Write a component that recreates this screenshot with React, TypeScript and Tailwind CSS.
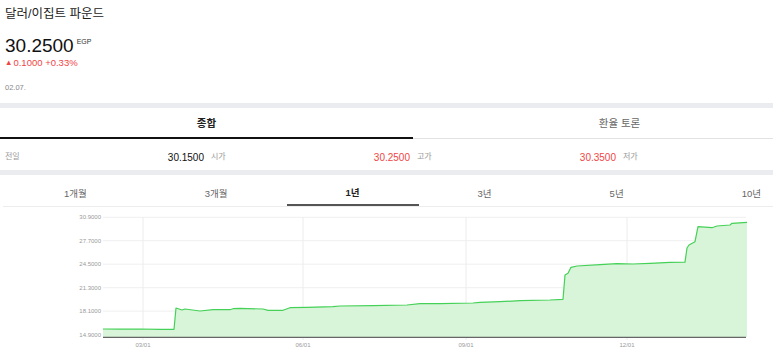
import React from "react";

const FONT = { fontFamily: '"Liberation Sans", "Noto Sans CJK KR", Arial, sans-serif' };

const pts: [number, number][] = [
  [103, 329], [120, 329.2], [140, 329], [160, 329.3], [174, 329.3], [176, 308], [182, 310], [185, 309],
  [200, 311], [213, 309.7], [230, 309.7], [233, 308.7], [240, 308.3], [263, 309], [268, 310.3], [283, 310.3],
  [290, 307.7], [307, 307.3], [333, 306.7], [340, 306], [373, 305.7], [407, 305], [420, 303.7], [440, 303.7],
  [473, 303], [480, 302.3], [500, 301.7], [520, 300.7], [550, 300], [563, 299.3], [565, 275], [568, 273.3],
  [571, 267.3], [577, 266], [600, 264.7], [617, 263.7], [633, 264], [650, 263.3], [670, 262.3], [685, 262.2],
  [687, 248], [689, 245], [695, 241.7], [698, 226.7], [712, 227.7], [717, 226], [730, 225], [732, 223.3],
  [747, 222.3],
];

const yLabels = [
  ["30.9000", 217.3],
  ["27.7000", 240.7],
  ["24.5000", 264.2],
  ["21.3000", 287.7],
  ["18.1000", 311.1],
  ["14.9000", 334.5],
] as const;

const xLabels = [
  ["03/01", 143],
  ["06/01", 303],
  ["09/01", 466],
  ["12/01", 627],
] as const;

function Chart() {
  const line = pts.map((p, i) => `${i ? "L" : "M"}${p[0]},${p[1]}`).join(" ");
  const area = `${line} L747,337 L103,337 Z`;
  return (
    <svg width={773} height={145} viewBox="0 207 773 145" className="block">
      {yLabels.map(([t, y]) => (
        <g key={t}>
          <line x1={103} x2={746} y1={y} y2={y} stroke="#efefef" strokeWidth={1} />
          <text x={101} y={y + 2} textAnchor="end" fontSize={6} fill="#9a9a9a" fontFamily="Liberation Sans, Arial, sans-serif">
            {t}
          </text>
        </g>
      ))}
      {xLabels.map(([t, x]) => (
        <g key={t}>
          <line x1={x} x2={x} y1={217} y2={340} stroke="#ececec" strokeWidth={1} />
          <text x={x} y={347} textAnchor="middle" fontSize={6} fill="#9a9a9a" fontFamily="Liberation Sans, Arial, sans-serif">
            {t}
          </text>
        </g>
      ))}
      <path d={area} fill="#d9f5d9" />
      <path d={line} fill="none" stroke="#45d157" strokeWidth={1.2} strokeLinejoin="round" />
      <line x1={103} x2={746} y1={337.3} y2={337.3} stroke="#666" strokeWidth={1.3} />
    </svg>
  );
}

export default function App() {
  const periods = ["1개월", "3개월", "1년", "3년", "5년", "10년"];
  const cells: [string, string, boolean][] = [
    ["전일", "30.1500", false],
    ["시가", "30.2500", true],
    ["고가", "30.3500", true],
    ["저가", "", false],
  ];
  return (
    <div className="w-[773px] h-[352px] overflow-hidden bg-white" style={FONT}>
      {/* header */}
      <div className="h-[103px] pl-[5px] pt-[7px]">
        <div className="text-[12.5px] leading-[14px] text-[#222]">달러/이집트 파운드</div>
        <div className="flex items-start mt-[15px]">
          <span className="text-[19px] leading-[20px] text-[#111]">30.2500</span>
          <span className="text-[7px] leading-[8px] text-[#333] ml-[3px] mt-[2px]">EGP</span>
        </div>
        <div className="flex items-center text-[9.5px] leading-[12px] text-[#f04545] mt-[1px]">
          <span className="text-[7.5px] mr-[1px]">▲</span>
          <span>0.1000 +0.33%</span>
        </div>
        <div className="text-[7.5px] leading-[10px] text-[#888] mt-[14px]">02.07.</div>
      </div>
      <div className="h-[5px] bg-[#ebecef]" />
      {/* main tabs */}
      <div className="flex h-[31px] w-[826px]">
        <div className="w-[413px] shrink-0 flex items-center justify-center border-b-2 border-[#111] text-[10.5px] font-bold text-[#222] pt-[2px]">
          종합
        </div>
        <div className="w-[413px] shrink-0 flex items-center justify-center border-b border-[#e2e2e2] text-[10.5px] text-[#666] pt-[2px]">
          환율 토론
        </div>
      </div>
      {/* data row */}
      <div className="flex h-[31px] pl-[5px] gap-[7px] pt-[5px] items-center w-[900px]">
        {cells.map(([l, v, red]) => (
          <div key={l} className="w-[199px] shrink-0 flex items-center justify-between">
            <span className="text-[8px] text-[#999]">{l}</span>
            <span className={`text-[10px] ${red ? "text-[#f04545]" : "text-[#111]"}`}>{v}</span>
          </div>
        ))}
      </div>
      <div className="h-[5px] bg-[#ebecef]" />
      {/* period tabs */}
      <div className="ml-[3px] h-[32px] border-b border-[#ededed] flex pl-[2px] w-[900px]">
        {periods.map((p) => {
          const active = p === "1년";
          return (
            <div
              key={p}
              className={`px-[59px] shrink-0 flex items-center justify-center pt-[8px] text-[9.5px] ${
                active ? "border-b-2 border-[#555] font-bold text-[#222]" : "text-[#666]"
              }`}
            >
              {p}
            </div>
          );
        })}
      </div>
      <Chart />
    </div>
  );
}
